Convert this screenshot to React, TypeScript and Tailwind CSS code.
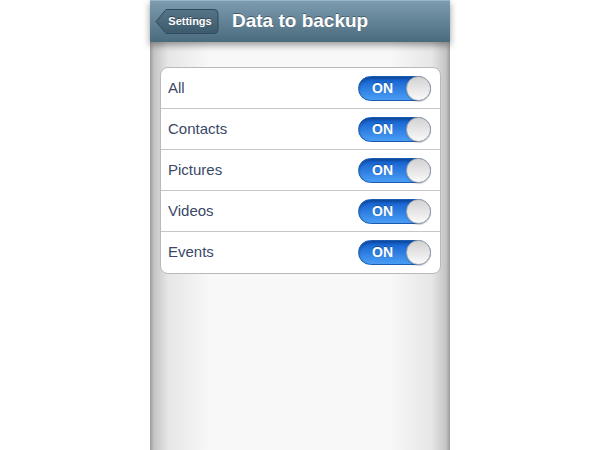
import React from 'react';

const rows = ['All', 'Contacts', 'Pictures', 'Videos', 'Events'];

const Toggle: React.FC = () => (
  <div className="relative w-[73px] h-[25px] rounded-full border border-[#1a5bb0] bg-gradient-to-b from-[#0f5ccc] to-[#4a9ef5] shadow-[inset_0_2px_3px_rgba(0,0,0,0.25)]">
    <span className="absolute left-[13px] top-0 h-full flex items-center text-[14px] font-bold text-white [text-shadow:0_-1px_0_rgba(0,0,0,0.3)]">
      ON
    </span>
    <div className="absolute right-[-1px] top-[-1px] w-[25px] h-[25px] rounded-full border border-[#a9a9a9] bg-gradient-to-b from-[#d2d2d2] to-[#fafafa] shadow-[0_1px_1px_rgba(0,0,0,0.2)]" />
  </div>
);

const BackButton: React.FC = () => (
  <div className="relative w-[64px] h-[27px] flex items-center justify-center pl-[6px]">
    <svg className="absolute inset-0" width="64" height="27" viewBox="0 0 64 27">
      <defs>
        <linearGradient id="bb" x1="0" y1="0" x2="0" y2="1">
          <stop offset="0" stopColor="#557587" />
          <stop offset="1" stopColor="#3c5a6c" />
        </linearGradient>
      </defs>
      <path
        d="M1 13.5 L11 1.5 H59 Q63 1.5 63 5.5 V21.5 Q63 25.5 59 25.5 H11 Z"
        fill="url(#bb)"
        stroke="#2f4a5a"
        strokeWidth="1"
      />
    </svg>
    <span className="relative text-[11px] font-bold text-white [text-shadow:0_-1px_0_rgba(0,0,0,0.4)]">
      Settings
    </span>
  </div>
);

const App: React.FC = () => {
  return (
    <div className="w-[600px] h-[450px] bg-white flex justify-center font-['Liberation_Sans',Arial,sans-serif]">
      <div className="w-[300px] h-full flex flex-col bg-[linear-gradient(to_right,#9a9a9a_0px,#c4c4c4_4px,#e6e6e6_18px,#f8f8f8_60px,#f8f8f8_240px,#e6e6e6_282px,#c4c4c4_296px,#9a9a9a_300px)]">
        <div className="relative z-10 h-[42px] flex items-center gap-[13px] pl-[5px] bg-gradient-to-b from-[#7d9cb0] to-[#4a6a7d] border-t border-[#9bb5c4] shadow-[0_3px_7px_rgba(0,0,0,0.4)]">
          <BackButton />
          <h1 className="text-[19px] font-bold text-white [text-shadow:0_-1px_0_rgba(0,0,0,0.35)]">
            Data to backup
          </h1>
        </div>

        <div className="mt-[25px] ml-[10px] mr-[9px] rounded-[8px] border border-[#b9b9b9] bg-white overflow-hidden">
          {rows.map((r, i) => (
            <div
              key={r}
              className={`h-[41px] flex items-center justify-between pl-[7px] pr-[9px] ${i < rows.length - 1 ? 'border-b border-[#c6c6c6]' : ''}`}
            >
              <span className="text-[15px] text-[#3a4867]">{r}</span>
              <Toggle />
            </div>
          ))}
        </div>
      </div>
    </div>
  );
};

export default App;
